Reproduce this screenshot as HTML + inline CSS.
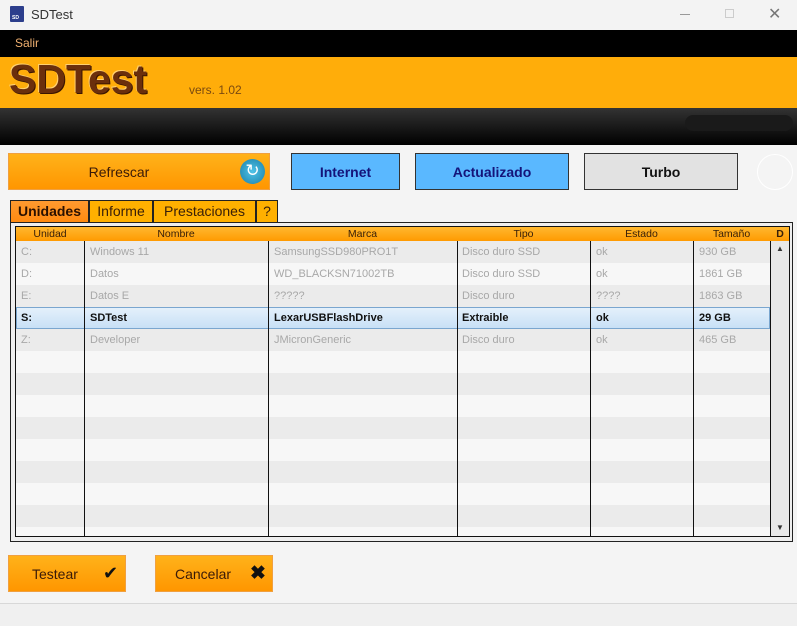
<!DOCTYPE html>
<html><head><meta charset="utf-8"><style>
*{margin:0;padding:0;box-sizing:border-box}
body{width:797px;height:626px;overflow:hidden;background:#f4f4f4;font-family:"Liberation Sans",Arial,sans-serif;position:relative}
.a{position:absolute}
.btn{position:absolute;background:linear-gradient(#ffb21a,#ff9600);border:1px solid #f0a040;color:#3a1a08;font-size:14px;display:flex;align-items:center}
.bb{position:absolute;border:1px solid #333;font-weight:bold;font-size:14px;display:flex;align-items:center;justify-content:center}
.tab{position:absolute;top:200px;height:22px;border:1px solid #222;border-bottom:none;background:#ffb000;font-size:14px;color:#3a2008;text-align:center;line-height:21px}
.row{position:absolute;left:16px;width:754px;height:22px;font-size:11px;color:#a8a8a8}
.row span{position:absolute;top:5px}
.vl{position:absolute;top:241px;width:1px;height:295px;background:#111}
.hd{position:absolute;top:227px;height:14px;font-size:10.5px;color:#3a2008;text-align:center;line-height:14px}
</style></head><body>
<div class="a" style="left:0;top:0;width:797px;height:30px;background:#f3f3f3"></div>
<div class="a" style="left:10px;top:6px;width:14px;height:16px;background:#2c3e8c;border-radius:1px"></div>
<div class="a" style="left:12px;top:15px;font-size:5px;color:#fff;font-weight:bold">SD</div>
<div class="a" style="left:31px;top:7px;font-size:13px;color:#333">SDTest</div>
<div class="a" style="left:680px;top:14px;width:10px;height:1px;background:#999"></div>
<div class="a" style="left:725px;top:9px;width:9px;height:9px;border:1px solid #ccc"></div>
<div class="a" style="left:768px;top:4px;font-size:16px;color:#777">✕</div>
<div class="a" style="left:0;top:30px;width:797px;height:27px;background:#000"></div>
<div class="a" style="left:15px;top:36px;font-size:12px;color:#f0b070">Salir</div>
<div class="a" style="left:0;top:57px;width:797px;height:51px;background:#ffad0a"></div>
<div class="a" style="left:9px;top:56px;font-size:41px;font-weight:bold;color:#6b2f0c;text-shadow:1px 1px 0 #3a1500,-1px -1px 0 #ffd070">SDTest</div>
<div class="a" style="left:189px;top:83px;font-size:12px;color:#7a4a10">vers. 1.02</div>
<div class="a" style="left:0;top:108px;width:797px;height:37px;background:linear-gradient(#333,#000)"></div>
<div class="a" style="left:685px;top:115px;width:108px;height:16px;border-radius:8px;background:#1a1a1a"></div>
<div class="btn" style="left:8px;top:153px;width:262px;height:37px;justify-content:center;padding-right:40px">Refrescar</div>
<div class="a" style="left:240px;top:159px;width:25px;height:25px;border-radius:50%;background:radial-gradient(#4fc3e8,#1a7fa8);color:#fff;font-size:17px;line-height:24px;text-align:center">↻</div>
<div class="bb" style="left:291px;top:153px;width:109px;height:37px;background:#5ab8ff;color:#14147a">Internet</div>
<div class="bb" style="left:415px;top:153px;width:154px;height:37px;background:#5ab8ff;color:#14147a">Actualizado</div>
<div class="bb" style="left:584px;top:153px;width:154px;height:37px;background:#e2e2e2;color:#111">Turbo</div>
<div class="a" style="left:757px;top:154px;width:36px;height:36px;border-radius:50%;border:1px solid #fff"></div>
<div class="tab" style="left:10px;width:79px;background:linear-gradient(#ff9a30,#ff8a10);font-weight:bold;color:#2a1000">Unidades</div>
<div class="tab" style="left:89px;width:64px">Informe</div>
<div class="tab" style="left:153px;width:103px">Prestaciones</div>
<div class="tab" style="left:256px;width:22px">?</div>
<div class="a" style="left:10px;top:222px;width:783px;height:320px;border:1px solid #222;background:#eee"></div>
<div class="a" style="left:15px;top:226px;width:775px;height:311px;border:1px solid #111;background:#f7f7f7"></div>
<div class="a" style="left:16px;top:227px;width:773px;height:14px;background:linear-gradient(#ffb830,#ff9a00)"></div>
<div class="hd" style="left:16px;width:68px">Unidad</div>
<div class="hd" style="left:84px;width:184px">Nombre</div>
<div class="hd" style="left:268px;width:189px">Marca</div>
<div class="hd" style="left:457px;width:133px">Tipo</div>
<div class="hd" style="left:590px;width:103px">Estado</div>
<div class="hd" style="left:693px;width:77px">Tamaño</div>
<div class="hd" style="left:772px;width:16px;font-weight:bold">D</div>
<div class="row" style="top:241px;background:#ebebeb"><span style="left:5px">C:</span><span style="left:74px">Windows 11</span><span style="left:258px">SamsungSSD980PRO1T</span><span style="left:446px">Disco duro SSD</span><span style="left:580px">ok</span><span style="left:683px">930 GB</span></div>
<div class="row" style="top:263px;background:#f7f7f7"><span style="left:5px">D:</span><span style="left:74px">Datos</span><span style="left:258px">WD_BLACKSN71002TB</span><span style="left:446px">Disco duro SSD</span><span style="left:580px">ok</span><span style="left:683px">1861 GB</span></div>
<div class="row" style="top:285px;background:#ebebeb"><span style="left:5px">E:</span><span style="left:74px">Datos E</span><span style="left:258px">?????</span><span style="left:446px">Disco duro</span><span style="left:580px">????</span><span style="left:683px">1863 GB</span></div>
<div class="row" style="top:307px;background:linear-gradient(#e4f0fb,#c8e0f6);border:1px solid #7aa6cf;color:#111;font-weight:bold"><span style="left:4px;top:4px">S:</span><span style="left:73px;top:4px">SDTest</span><span style="left:257px;top:4px">LexarUSBFlashDrive</span><span style="left:445px;top:4px">Extraible</span><span style="left:579px;top:4px">ok</span><span style="left:682px;top:4px">29 GB</span></div>
<div class="row" style="top:329px;background:#ebebeb"><span style="left:5px">Z:</span><span style="left:74px">Developer</span><span style="left:258px">JMicronGeneric</span><span style="left:446px">Disco duro</span><span style="left:580px">ok</span><span style="left:683px">465 GB</span></div>
<div class="row" style="top:351px;background:#f7f7f7"></div>
<div class="row" style="top:373px;background:#ebebeb"></div>
<div class="row" style="top:395px;background:#f7f7f7"></div>
<div class="row" style="top:417px;background:#ebebeb"></div>
<div class="row" style="top:439px;background:#f7f7f7"></div>
<div class="row" style="top:461px;background:#ebebeb"></div>
<div class="row" style="top:483px;background:#f7f7f7"></div>
<div class="row" style="top:505px;background:#ebebeb"></div>
<div class="vl" style="left:84px"></div>
<div class="vl" style="left:268px"></div>
<div class="vl" style="left:457px"></div>
<div class="vl" style="left:590px"></div>
<div class="vl" style="left:693px"></div>
<div class="vl" style="left:770px"></div>
<div class="a" style="left:771px;top:241px;width:18px;height:295px;background:#e8e8e8"></div>
<div class="a" style="left:776px;top:244px;font-size:8px;color:#333">▲</div>
<div class="a" style="left:776px;top:523px;font-size:8px;color:#333">▼</div>
<div class="btn" style="left:8px;top:555px;width:118px;height:37px;padding-left:23px">Testear</div>
<div class="a" style="left:103px;top:563px;font-size:18px;color:#111">✔</div>
<div class="btn" style="left:155px;top:555px;width:118px;height:37px;padding-left:19px">Cancelar</div>
<div class="a" style="left:250px;top:562px;font-size:19px;color:#111;font-weight:bold">✖</div>
<div class="a" style="left:0;top:603px;width:797px;height:23px;background:#f0f0f0;border-top:1px solid #d8d8d8"></div>
</body></html>
